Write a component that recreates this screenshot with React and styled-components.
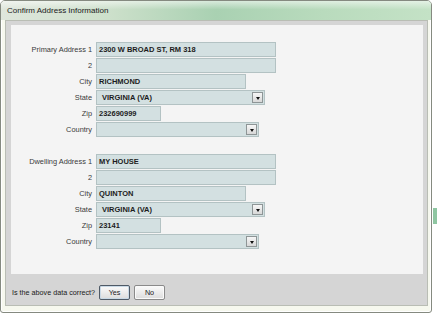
import React from "react";
import styled, { createGlobalStyle } from "styled-components";

const Global = createGlobalStyle`
  body {
    margin: 0;
    background: #ffffff;
    font-family: "Liberation Sans", Arial, sans-serif;
  }
`;

const Stage = styled.div`
  position: relative;
  width: 437px;
  height: 315px;
`;

const SideTab = styled.div`
  position: absolute;
  right: 0;
  top: 208px;
  width: 4px;
  height: 16px;
  background: #8fc6a2;
`;

const Window = styled.div`
  width: 432px;
  height: 313px;
  box-sizing: border-box;
  border: 1px solid #858a80;
  border-radius: 5px 5px 3px 3px;
  background: #f6f8ee;
  box-shadow: inset 0 0 0 1px #ffffff;
  display: flex;
  flex-direction: column;
  overflow: hidden;
`;

const TitleBar = styled.div`
  height: 19px;
  flex-shrink: 0;
  display: flex;
  align-items: center;
  padding-left: 6px;
  font-size: 8px;
  color: #1a1a1a;
  background:
    linear-gradient(to bottom, rgba(255, 255, 255, 0.55), rgba(255, 255, 255, 0) 45%),
    linear-gradient(to right, #dfe6dc 0%, #cde0cb 25%, #a9d1b2 50%, #b9dbbd 75%, #c4e2c6 100%);
`;

const Client = styled.div`
  flex: 1;
  margin: 0 3px 6px 4px;
  border: 1px solid #b9bdb4;
  background: #d5d5d5;
  display: flex;
  flex-direction: column;
  padding: 4px 4px 0 5px;
`;

const Panel = styled.div`
  height: 249px;
  box-sizing: border-box;
  background: #f4f4f4;
  padding-top: 17px;
  display: flex;
  flex-direction: column;
  gap: 17px;
`;

const Group = styled.div`
  display: flex;
  flex-direction: column;
  gap: 1px;
`;

const Row = styled.div`
  display: flex;
  align-items: center;
  height: 15px;
`;

const Label = styled.div`
  width: 81px;
  margin-right: 4px;
  text-align: right;
  font-size: 7.4px;
  color: #3a3a3a;
`;

const Field = styled.div`
  width: ${(p) => p.$w}px;
  height: 15px;
  box-sizing: border-box;
  border: 1px solid #b3c2c3;
  background: #d3e0e1;
  display: flex;
  align-items: center;
  padding-left: ${(p) => (p.$select ? 5 : 2)}px;
  font-size: 7.5px;
  font-weight: bold;
  color: #1c1c1c;
`;

const Value = styled.span`
  flex: 1;
  white-space: nowrap;
`;

const DropButton = styled.div`
  width: 11px;
  height: 11px;
  margin-right: 1px;
  box-sizing: border-box;
  border: 1px solid #8e9596;
  background: linear-gradient(to bottom, #f6f6f6, #d8d8d8);
  display: flex;
  align-items: center;
  justify-content: center;
`;

const Arrow = styled.div`
  width: 0;
  height: 0;
  border-left: 2.5px solid transparent;
  border-right: 2.5px solid transparent;
  border-top: 3px solid #111;
  margin-top: 1px;
`;

const Footer = styled.div`
  flex: 1;
  display: flex;
  align-items: center;
  padding-left: 1px;
  padding-top: 5px;
`;

const Question = styled.span`
  font-size: 7.2px;
  color: #1a1a1a;
  width: 87px;
`;

const Button = styled.button`
  width: 31px;
  height: 15px;
  margin-right: 4px;
  padding: 0;
  box-sizing: border-box;
  border: 1px solid ${(p) => (p.$default ? "#4f5a66" : "#8a8a8a")};
  border-radius: 2px;
  background: linear-gradient(to bottom, #fbfbfb 0%, #ececec 50%, #dcdcdc 100%);
  box-shadow: inset 0 0 0 1px ${(p) => (p.$default ? "#c9d9e6" : "#fafafa")};
  font-family: "Liberation Sans", Arial, sans-serif;
  font-size: 7.2px;
  color: #1a1a1a;
`;

const TextField = ({ label, value, w }) => (
  <Row>
    <Label>{label}</Label>
    <Field $w={w}>
      <Value>{value}</Value>
    </Field>
  </Row>
);

const SelectField = ({ label, value, w }) => (
  <Row>
    <Label>{label}</Label>
    <Field $w={w} $select>
      <Value>{value}</Value>
      <DropButton>
        <Arrow />
      </DropButton>
    </Field>
  </Row>
);

const AddressGroup = ({ title, line1, city, state, zip }) => (
  <Group>
    <TextField label={title} value={line1} w={180} />
    <TextField label="2" value="" w={180} />
    <TextField label="City" value={city} w={150} />
    <SelectField label="State" value={state} w={169} />
    <TextField label="Zip" value={zip} w={65} />
    <SelectField label="Country" value="" w={163} />
  </Group>
);

export default function App() {
  return (
    <Stage>
      <Global />
      <Window>
        <TitleBar>Confirm Address Information</TitleBar>
        <Client>
          <Panel>
            <AddressGroup
              title="Primary Address 1"
              line1="2300 W BROAD ST, RM 318"
              city="RICHMOND"
              state="VIRGINIA (VA)"
              zip="232690999"
            />
            <AddressGroup
              title="Dwelling Address 1"
              line1="MY HOUSE"
              city="QUINTON"
              state="VIRGINIA (VA)"
              zip="23141"
            />
          </Panel>
          <Footer>
            <Question>Is the above data correct?</Question>
            <Button $default>Yes</Button>
            <Button>No</Button>
          </Footer>
        </Client>
      </Window>
      <SideTab />
    </Stage>
  );
}
